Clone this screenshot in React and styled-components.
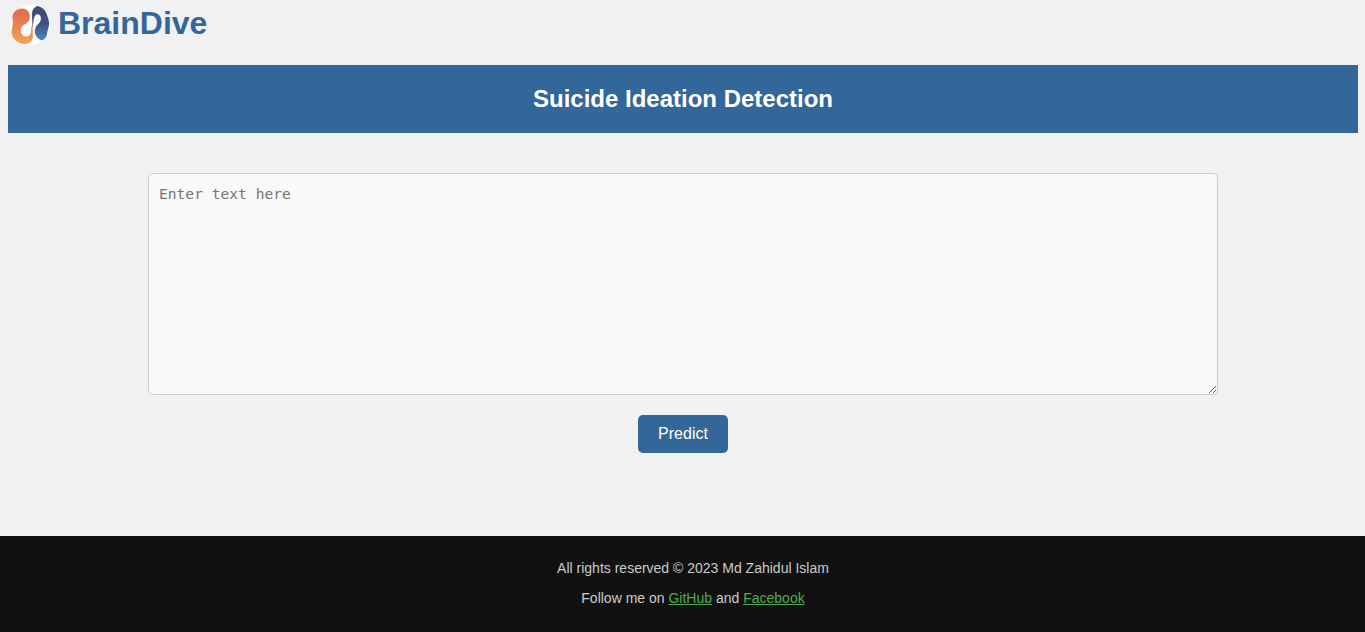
import React from "react";
import styled, { createGlobalStyle } from "styled-components";

const GlobalStyle = createGlobalStyle`
  * { box-sizing: border-box; }
  html, body { margin: 0; height: 100%; }
  body {
    background: #f1f1f1;
    font-family: Arial, "Liberation Sans", sans-serif;
    overflow: hidden;
  }
`;

const Page = styled.div`
  display: flex;
  flex-direction: column;
  height: 632px;
`;

const Brand = styled.header`
  display: flex;
  align-items: flex-start;
  height: 65px;
  padding: 5px 10px 0;
`;

const Logo = styled.svg`
  width: 40px;
  height: 40px;
  flex: none;
`;

const BrandName = styled.h1`
  margin: 0 0 0 8px;
  color: #336699;
  font-size: 32px;
  line-height: 36px;
`;

const Banner = styled.div`
  display: flex;
  align-items: center;
  justify-content: center;
  height: 68px;
  margin: 0 7px 0 8px;
  background: #336699;
`;

const BannerTitle = styled.h2`
  margin: 0;
  color: #fff;
  font-size: 24px;
  line-height: 28px;
`;

const Form = styled.form`
  display: flex;
  flex: 1;
  flex-direction: column;
  align-items: center;
  gap: 20px;
  padding: 40px 147px 0 148px;
`;

const TextInput = styled.textarea`
  display: block;
  width: 100%;
  height: 222px;
  margin: 0;
  padding: 10px;
  border: 1px solid #ccc;
  border-radius: 5px;
  background: #f9f9f9;
  font-family: "DejaVu Sans Mono", monospace;
  font-size: 14.6px;
  line-height: 19px;
  resize: vertical;

  &::placeholder { color: #757575; }
`;

const SubmitButton = styled.button`
  width: 90px;
  height: 38px;
  padding: 0;
  border: none;
  border-radius: 5px;
  background: #336699;
  color: #fff;
  font-family: inherit;
  font-size: 16px;
`;

const Footer = styled.footer`
  height: 96px;
  padding: 24px 0 0 21px;
  background: #111;
  color: #ccc;
  font-size: 14px;
  line-height: 16px;
  text-align: center;
`;

const FooterLine = styled.p`
  margin: 0 0 14px;
`;

const FooterLink = styled.a`
  color: #4caf50;
  text-decoration: underline;
`;

function BrainLogo() {
  return (
    <Logo viewBox="0 0 40 40" aria-hidden="true">
      <defs>
        <linearGradient id="warm" x1="0" y1="0" x2="0" y2="1">
          <stop offset="0.15" stopColor="#e4704f" />
          <stop offset="1" stopColor="#f0a557" />
        </linearGradient>
        <linearGradient id="cool" x1="0" y1="0" x2="0" y2="1">
          <stop offset="0" stopColor="#404a75" />
          <stop offset="0.5" stopColor="#3f507f" />
          <stop offset="1" stopColor="#4a8abb" />
        </linearGradient>
      </defs>
      <circle cx="20" cy="20" r="20" fill="#fdfdfd" />
      <path
        d="M12 3.4C6.8 3.4 2.6 7 2.4 12C2.3 15.2 3.2 16.5 2.9 19C2.5 21.8 1.5 23.6 1.6 27C1.9 33.6 8 39 14.5 39C19.6 39 22.9 36 22.9 31.5L22.5 20.5C21.6 20.6 21.3 22 21.2 25C21 29 19.5 31.5 16.5 31.5C13 31.5 10.8 28.8 10.9 25.2C11 22.5 12.3 20.8 14.5 19.6C18 17.8 20 15.4 19.9 11.5C19.7 6.5 16.6 3.4 12 3.4Z"
        fill="url(#warm)"
      />
      <path
        d="M27.5 1C23.8 2 22 5.2 22 9.5L22.5 23.5C23.6 19.5 23 10 27 9.2C29.8 8.7 31.2 11 30.9 14C30.6 16.6 29.7 17.7 28 19.2C25.8 21.2 24.6 23.8 24.8 27C25.2 31 28.2 34.3 32 35.5C35 34.3 37 31.3 37.2 27.8C37.3 25 39.2 22.8 39.1 18.5C39 14.8 38.1 13.4 37.2 10.5C35.8 5.5 32.5 2 27.5 1Z"
        fill="url(#cool)"
      />
    </Logo>
  );
}

export default function App() {
  return (
    <>
      <GlobalStyle />
      <Page>
        <Brand>
          <BrainLogo />
          <BrandName>BrainDive</BrandName>
        </Brand>
        <Banner>
          <BannerTitle>Suicide Ideation Detection</BannerTitle>
        </Banner>
        <Form>
          <TextInput placeholder="Enter text here" />
          <SubmitButton type="button">Predict</SubmitButton>
        </Form>
        <Footer>
          <FooterLine>All rights reserved © 2023 Md Zahidul Islam</FooterLine>
          <FooterLine>
            Follow me on <FooterLink href="#">GitHub</FooterLink> and{" "}
            <FooterLink href="#">Facebook</FooterLink>
          </FooterLine>
        </Footer>
      </Page>
    </>
  );
}
